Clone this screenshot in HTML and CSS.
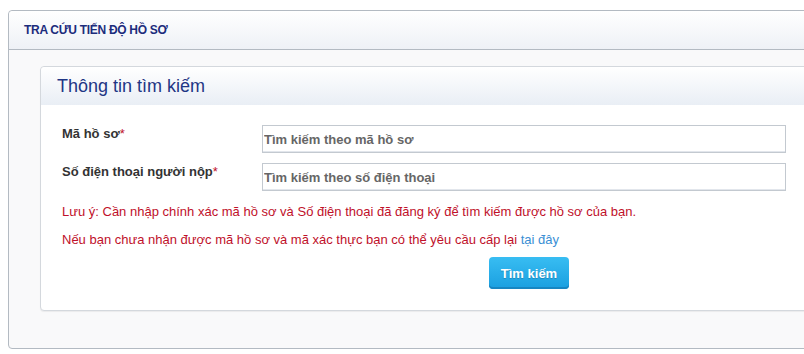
FILE: index.html
```html
<!DOCTYPE html>
<html lang="vi">
<head>
<meta charset="utf-8">
<link rel="stylesheet" href="styles.css">
</head>
<body>
<div class="page">
  <div class="panel">
    <div class="panel-head">TRA CỨU TIẾN ĐỘ HỒ SƠ</div>
    <div class="panel-body">
      <div class="box">
        <div class="box-head">Thông tin tìm kiếm</div>
        <div class="box-body">
          <div class="row">
            <label class="lbl">Mã hồ sơ<span class="req">*</span></label>
            <input class="inp" type="text" placeholder="Tìm kiếm theo mã hồ sơ">
          </div>
          <div class="row">
            <label class="lbl">Số điện thoại người nộp<span class="req">*</span></label>
            <input class="inp" type="text" placeholder="Tìm kiếm theo số điện thoại">
          </div>
          <p class="note">Lưu ý: Cần nhập chính xác mã hồ sơ và Số điện thoại đã đăng ký để tìm kiếm được hồ sơ của bạn.</p>
          <p class="note">Nếu bạn chưa nhận được mã hồ sơ và mã xác thực bạn có thể yêu cầu cấp lại <a class="link" href="#">tại đây</a></p>
          <div class="actions">
            <button class="btn" type="button">Tìm kiếm</button>
          </div>
        </div>
      </div>
    </div>
  </div>
</div>
</body>
</html>
```
FILE: styles.css
```css
html, body {
  margin: 0;
  padding: 0;
  background: #fff;
  overflow: hidden;
}
body {
  font-family: "Liberation Sans", Arial, sans-serif;
}
.page {
  padding: 10px 0 0 8px;
  width: 830px;
}
.panel {
  border: 1px solid #b3bac2;
  border-radius: 4px 0 0 4px;
  background: #f9f9fa;
}
.panel-head {
  height: 38px;
  line-height: 38px;
  padding-left: 15px;
  background: linear-gradient(#ffffff, #eef1f6);
  border-bottom: 1px solid #b3bac2;
  border-radius: 4px 0 0 0;
  color: #1c2c7c;
  font-weight: bold;
  font-size: 12px;
  letter-spacing: -0.3px;
}
.panel-body {
  padding: 16px 0 37px 31px;
}
.box {
  border: 1px solid #d4d8dd;
  border-radius: 4px 0 0 4px;
  background: #fff;
  box-shadow: 0 1px 1px rgba(0,0,0,0.06);
}
.box-head {
  height: 38px;
  line-height: 38px;
  padding-left: 16px;
  background: linear-gradient(#ffffff, #e9eef5);
  border-radius: 4px 0 0 0;
  color: #1f3685;
  font-size: 18px;
}
.box-body {
  padding: 20px 0 21px 21px;
}
.row {
  display: flex;
  align-items: center;
  height: 28px;
  margin-bottom: 10px;
}
.lbl {
  width: 200px;
  flex: none;
  font-size: 13px;
  font-weight: bold;
  color: #333;
  align-self: flex-start;
  padding-top: 1px;
}
.req {
  color: #c0102a;
  font-weight: normal;
}
.inp {
  box-sizing: border-box;
  width: 524px;
  height: 28px;
  border: 1px solid #c3c9d0;
  padding: 0 1px;
  font-family: "Liberation Sans", Arial, sans-serif;
  font-size: 13px;
  font-weight: bold;
  color: #555;
  background: #fff;
  box-shadow: inset 0 -1px 0 #e2e6ec;
}
.inp::placeholder {
  color: #666;
  opacity: 1;
}
.note {
  margin: 0 0 13px;
  font-size: 13px;
  line-height: 15px;
  color: #c0102a;
}
.row + .note {
  margin-top: 13px;
}
.note:last-of-type {
  margin-bottom: 10px;
}
.link {
  color: #3a8fd4;
  text-decoration: none;
}
.actions {
  padding-left: 427px;
}
.btn {
  width: 80px;
  height: 32px;
  border: none;
  border-radius: 4px;
  background: linear-gradient(#38bdf2, #1a9fe0);
  box-shadow: inset 0 -2px 0 #1786c2;
  color: #fff;
  font-family: "Liberation Sans", Arial, sans-serif;
  font-weight: bold;
  font-size: 13px;
  text-shadow: 0 1px 1px rgba(0,0,0,0.2);
  cursor: pointer;
}
```
